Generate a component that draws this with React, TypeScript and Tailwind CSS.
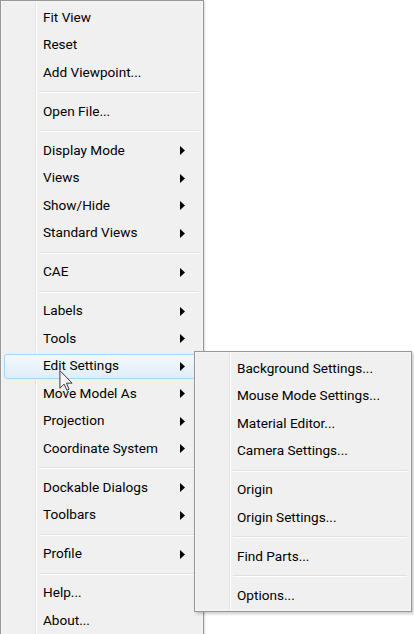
import React from "react";

type Entry = { label: string; sub?: boolean; hot?: boolean } | "sep";

const mainItems: Entry[] = [
  { label: "Fit View" },
  { label: "Reset" },
  { label: "Add Viewpoint..." },
  "sep",
  { label: "Open File..." },
  "sep",
  { label: "Display Mode", sub: true },
  { label: "Views", sub: true },
  { label: "Show/Hide", sub: true },
  { label: "Standard Views", sub: true },
  "sep",
  { label: "CAE", sub: true },
  "sep",
  { label: "Labels", sub: true },
  { label: "Tools", sub: true },
  { label: "Edit Settings", sub: true, hot: true },
  { label: "Move Model As", sub: true },
  { label: "Projection", sub: true },
  { label: "Coordinate System", sub: true },
  "sep",
  { label: "Dockable Dialogs", sub: true },
  { label: "Toolbars", sub: true },
  "sep",
  { label: "Profile", sub: true },
  "sep",
  { label: "Help..." },
  { label: "About..." },
];

const subItems: Entry[] = [
  { label: "Background Settings..." },
  { label: "Mouse Mode Settings..." },
  { label: "Material Editor..." },
  { label: "Camera Settings..." },
  "sep",
  { label: "Origin" },
  { label: "Origin Settings..." },
  "sep",
  { label: "Find Parts..." },
  "sep",
  { label: "Options..." },
];

function Arrow() {
  return (
    <svg width="5" height="9" viewBox="0 0 5 9" className="ml-auto mr-[14px] shrink-0">
      <polygon points="0,0 5,4.5 0,9" fill="#000" />
    </svg>
  );
}

function MenuList({ items }: { items: Entry[] }) {
  return (
    <div className="flex flex-col px-[3px] pt-[3px]">
      {items.map((it, i) =>
        it === "sep" ? (
          <div key={i} className="h-[11.5px] flex flex-col justify-center ml-[35px] mr-[1px]">
            <div className="h-px bg-[#e0e0e0]" />
            <div className="h-px bg-white" />
          </div>
        ) : (
          <div
            key={i}
            className={
              it.hot
                ? "my-[1px] h-[25.5px] flex items-center rounded-[3px] border border-[#a9d4f6] bg-gradient-to-b from-[#f4f9fe] to-[#e0edfb]"
                : "my-[1px] h-[25.5px] flex items-center border border-transparent"
            }
          >
            <span className="pl-[38px] text-[13.6px] leading-none text-black">{it.label}</span>
            {it.sub && <Arrow />}
          </div>
        )
      )}
    </div>
  );
}

function Cursor() {
  return (
    <svg width="14" height="21" viewBox="0 0 12 19" className="absolute left-[59px] top-[370px] z-20">
      <path d="M0.5,0.5 L0.5,16.5 L4.3,12.8 L6.8,18.3 L8.8,17.4 L6.4,11.9 L11.5,11.9 Z" fill="#f4f4f4" stroke="#3a3a3a" strokeWidth="0.9" strokeLinejoin="round" />
    </svg>
  );
}

const gutter =
  "bg-[linear-gradient(to_right,#f0f0f0_0,#f0f0f0_34px,#e2e3e3_34px,#e2e3e3_35px,#ffffff_35px,#ffffff_36px,#f0f0f0_36px)]";

export default function App() {
  return (
    <div
      className="relative w-[414px] h-[634px] overflow-hidden bg-white"
      style={{ fontFamily: 'Roboto, "Noto Sans", sans-serif' }}
    >
      <div className={`w-[204px] h-[640px] border border-[#979797] ${gutter} shadow-[inset_0_0_0_1px_#f5f5f5,1px_1px_2px_rgba(0,0,0,0.15)]`}>
        <MenuList items={mainItems} />
      </div>
      <div
        className={`absolute left-[194px] top-[351px] z-10 w-[218px] h-[261px] border border-[#979797] ${gutter} shadow-[inset_0_0_0_1px_#f5f5f5,2px_2px_3px_rgba(0,0,0,0.2)]`}
      >
        <MenuList items={subItems} />
      </div>
      <Cursor />
    </div>
  );
}
